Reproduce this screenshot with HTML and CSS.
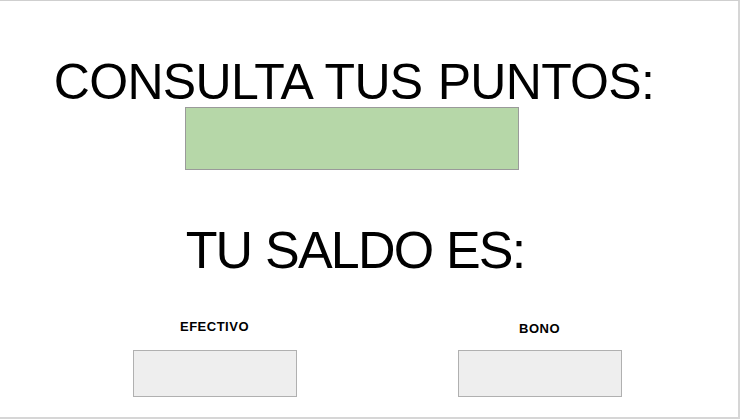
FILE: index.html
```html
<!DOCTYPE html>
<html lang="es">
<head>
<meta charset="utf-8">
<title>Consulta tus puntos</title>
<link rel="stylesheet" href="styles.css">
</head>
<body>
<div class="frame">
  <section class="top">
    <h1 class="title">CONSULTA TUS PUNTOS:</h1>
    <div class="points-box"></div>
    <h2 class="subtitle">TU SALDO ES:</h2>
  </section>
  <section class="balances">
    <div class="balance">
      <div class="label">EFECTIVO</div>
      <div class="value-box"></div>
    </div>
    <div class="balance balance-bono">
      <div class="label">BONO</div>
      <div class="value-box"></div>
    </div>
  </section>
</div>
</body>
</html>
```

FILE: styles.css
```css
html, body {
  margin: 0;
  padding: 0;
  background: #ffffff;
}

body {
  font-family: "Liberation Sans", Arial, sans-serif;
  color: #000;
}

.frame {
  box-sizing: border-box;
  width: 740px;
  height: 419px;
  border-top: 1px solid #cfcfcf;
  border-right: 2px solid #d6d6d6;
  border-bottom: 2px solid #d6d6d6;
  display: flex;
  flex-direction: column;
}

.top {
  display: flex;
  flex-direction: column;
  align-items: center;
  padding-top: 56px;
  padding-right: 36px;
}

.title {
  margin: 0;
  font-weight: normal;
  font-size: 50px;
  line-height: 50px;
  letter-spacing: -0.7px;
  word-spacing: 2px;
  white-space: nowrap;
  padding-left: 6px;
}

.points-box {
  box-sizing: border-box;
  width: 334px;
  height: 63px;
  margin-left: 2px;
  background: #b6d7a8;
  border: 1px solid #9a9a9a;
}

.subtitle {
  margin: 54px 0 0 0;
  font-weight: normal;
  font-size: 52px;
  line-height: 52px;
  letter-spacing: -1.8px;
  word-spacing: 1px;
  white-space: nowrap;
  padding-left: 8px;
}

.balances {
  display: flex;
  gap: 162px;
  padding-left: 133px;
  padding-top: 43px;
}

.balance {
  width: 163px;
  display: flex;
  flex-direction: column;
  align-items: center;
}

.label {
  font-weight: bold;
  font-size: 13px;
  line-height: 15px;
  letter-spacing: 0.5px;
  height: 15px;
  margin-bottom: 16px;
}

.balance-bono .label {
  margin-top: 2px;
  margin-bottom: 14px;
}

.value-box {
  box-sizing: border-box;
  width: 164px;
  height: 47px;
  background: #eeeeee;
  border: 1.5px solid #b0b0b0;
}
```
